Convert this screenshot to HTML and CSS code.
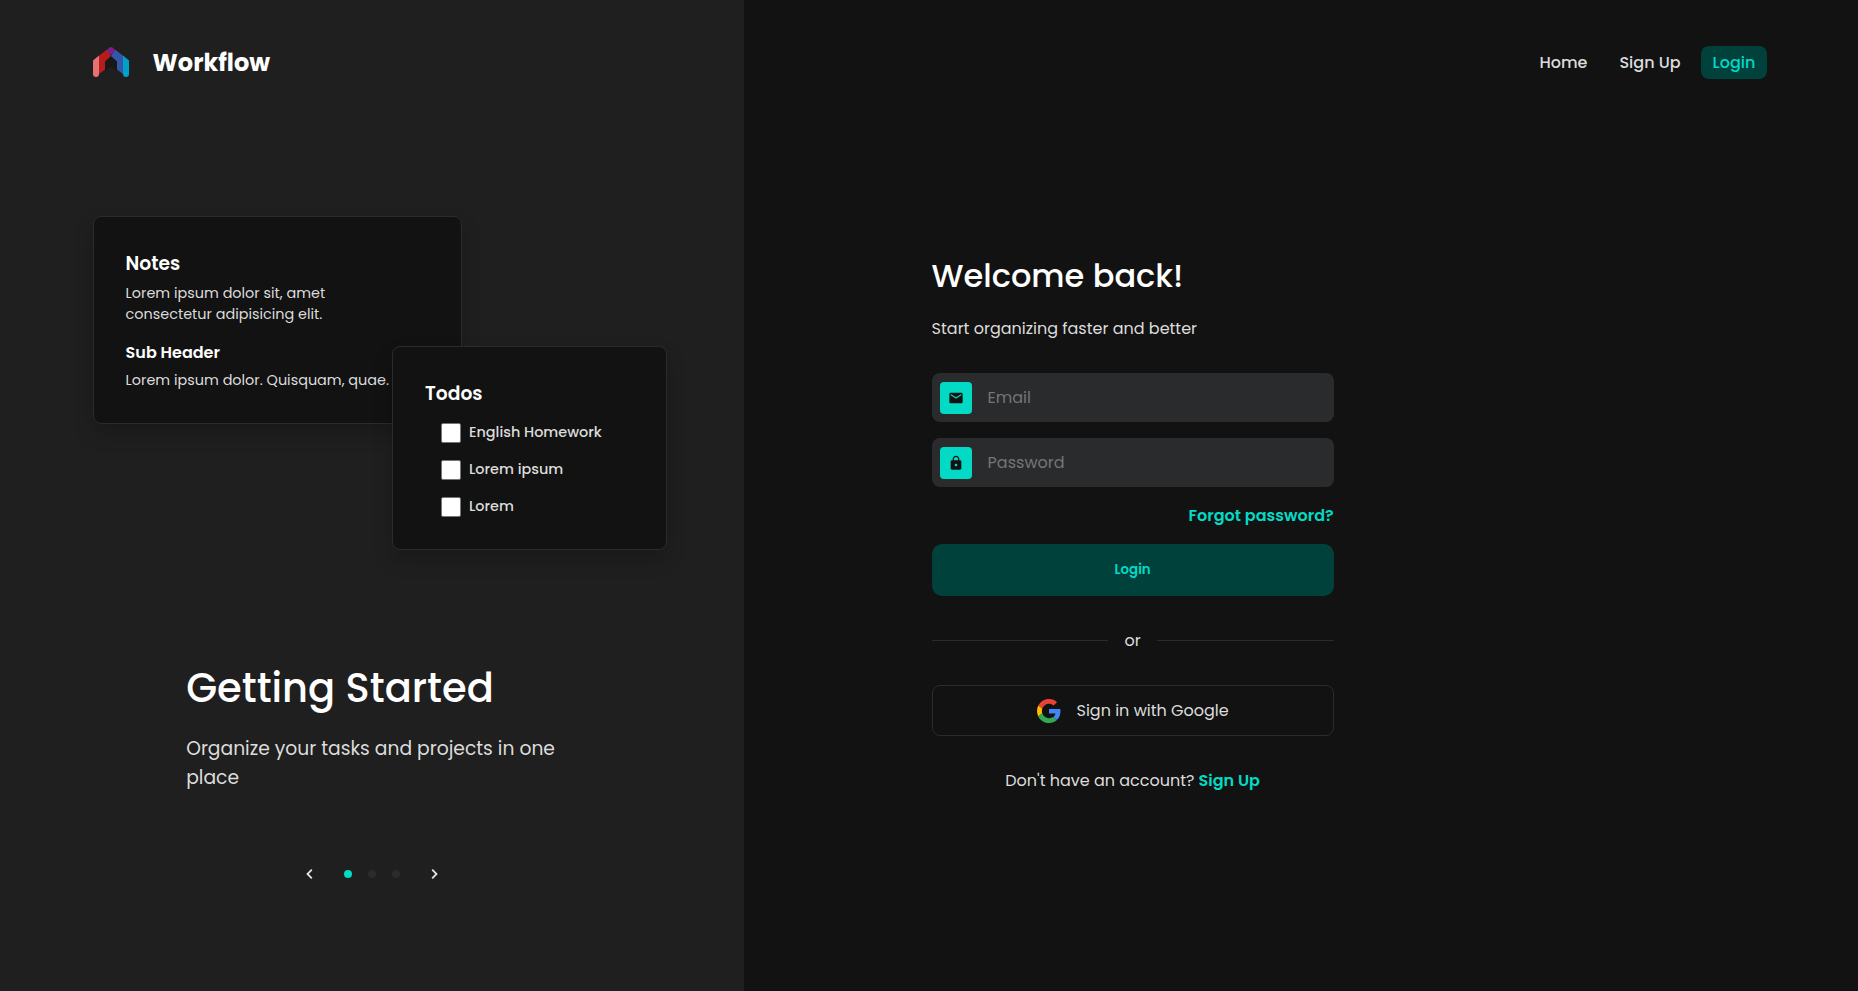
FILE: index.html
```html
<!DOCTYPE html>
<html lang="en">
<head>
<meta charset="utf-8">
<title>Workflow</title>
<link rel="stylesheet" href="styles.css">
</head>
<body>
<div class="page">
  <aside class="intro">
    <div class="brand">
      <svg class="logo" width="36" height="30" viewBox="0 0 36 30">
        <path fill="#171717" d="M12 15 18 9l6 6v9l-6-4-6 4z"/>
        <path fill="#e57373" d="M0 13.500 6 8.500V27a3 3 0 0 1-6 0z"/>
        <path fill="#b71c1c" d="M6 8.800 14 2.500 18 9 12 14.500V22.500L6 27z"/>
        <path fill="#00a0c8" d="M36 13.500 30 8.500V27a3 3 0 0 0 6 0z"/>
        <path fill="#3457a8" d="M30 8.800 22 2.500 18 9 24 14.500V22.500L30 27z"/>
        <path fill="#7b1f8e" d="M13.500 3.500 16.500.6a2.400 2.400 0 0 1 3 0L22.500 3.500 18 8z"/>
      </svg>
      <span class="brand-name">Workflow</span>
    </div>
    <div class="showcase">
      <section class="card notes">
        <h3 class="card-title">Notes</h3>
        <p class="card-text first">Lorem ipsum dolor sit, amet<br>consectetur adipisicing elit.</p>
        <h4 class="card-sub">Sub Header</h4>
        <p class="card-text">Lorem ipsum dolor. Quisquam, quae.</p>
      </section>
      <section class="card todos">
        <h3 class="card-title">Todos</h3>
        <ul class="todo-list">
          <li class="todo"><span class="box"></span><span>English Homework</span></li>
          <li class="todo"><span class="box"></span><span>Lorem ipsum</span></li>
          <li class="todo"><span class="box"></span><span>Lorem</span></li>
        </ul>
      </section>
    </div>
    <div class="pitch">
      <h1 class="pitch-title">Getting Started</h1>
      <p class="pitch-text">Organize your tasks and projects in one<br>place</p>
    </div>
    <div class="pager">
      <svg class="chev" width="16" height="16" viewBox="0 0 16 16"><path d="M10.800 3.700 6.500 8l4.300 4.300"/></svg>
      <div class="dots"><i class="dot on"></i><i class="dot"></i><i class="dot"></i></div>
      <svg class="chev" width="16" height="16" viewBox="0 0 16 16"><path d="M5.200 3.700 9.500 8l-4.300 4.300"/></svg>
    </div>
  </aside>
  <main class="main">
    <nav class="nav">
      <a class="nav-link n-home">Home</a>
      <a class="nav-link n-sign">Sign Up</a>
      <a class="nav-link nav-cta">Login</a>
    </nav>
    <div class="form">
      <h2 class="welcome">Welcome back!</h2>
      <p class="tagline">Start organizing faster and better</p>
      <div class="field">
        <span class="field-icon"><svg width="16" height="16" viewBox="0 0 24 24"><path d="M20 4H4c-1.100 0-1.990.9-1.990 2L2 18c0 1.100.9 2 2 2h16c1.100 0 2-.9 2-2V6c0-1.100-.9-2-2-2zm0 4-8 5-8-5V6l8 5 8-5v2z"/></svg></span>
        <span class="hint">Email</span>
      </div>
      <div class="field">
        <span class="field-icon"><svg width="16" height="16" viewBox="0 0 24 24"><path d="M18 8h-1V6c0-2.760-2.240-5-5-5S7 3.240 7 6v2H6c-1.100 0-2 .9-2 2v10c0 1.100.9 2 2 2h12c1.100 0 2-.9 2-2V10c0-1.100-.9-2-2-2zm-6 9c-1.100 0-2-.9-2-2s.9-2 2-2 2 .9 2 2-.9 2-2 2zm3.100-9H8.900V6c0-1.710 1.390-3.100 3.100-3.100 1.710 0 3.100 1.390 3.100 3.100v2z"/></svg></span>
        <span class="hint">Password</span>
      </div>
      <a class="forgot">Forgot password?</a>
      <div class="submit">Login</div>
      <div class="divider"><span class="rule"></span><span class="or">or</span><span class="rule"></span></div>
      <div class="google">
        <svg width="24" height="24" viewBox="0 0 48 48">
          <path fill="#ea4335" d="M24 9.500c3.540 0 6.710 1.220 9.210 3.600l6.850-6.850C35.900 2.380 30.470 0 24 0 14.620 0 6.510 5.380 2.560 13.220l7.980 6.190C12.430 13.720 17.740 9.500 24 9.500z"/>
          <path fill="#4285f4" d="M46.980 24.550c0-1.570-.15-3.090-.38-4.550H24v9.020h12.940c-.58 2.960-2.260 5.480-4.780 7.180l7.730 6c4.510-4.180 7.090-10.360 7.090-17.650z"/>
          <path fill="#fbbc05" d="M10.530 28.590c-.48-1.450-.76-2.990-.76-4.590s.27-3.140.76-4.590l-7.980-6.190C.92 16.460 0 20.120 0 24s.92 7.540 2.560 10.780l7.970-6.190z"/>
          <path fill="#34a853" d="M24 48c6.480 0 11.930-2.130 15.890-5.810l-7.730-6c-2.150 1.450-4.920 2.300-8.160 2.300-6.260 0-11.570-4.220-13.470-9.910l-7.980 6.190C6.510 42.620 14.620 48 24 48z"/>
        </svg>
        <span class="google-text">Sign in with Google</span>
      </div>
      <p class="signup"><span>Don't have an account?</span><a class="signup-link">Sign Up</a></p>
    </div>
  </main>
</div>
</body>
</html>
```
FILE: styles.css
```css
* { box-sizing: border-box; margin: 0; padding: 0; }
body { font-family: Poppins, Inter, sans-serif; font-size: 16px; line-height: 24px; color: #dcdcdc; background: #121212; white-space: nowrap; }
.page { display: flex; height: 991px; overflow: hidden; }
svg { display: block; flex: none; }

.intro { width: 743.600px; background: #1f1f1f; padding: 46px 77px 0 92.600px; flex: none; }
.brand { display: flex; align-items: center; gap: 24px; height: 32px; }
.brand-name { font-size: 24px; font-weight: 700; color: #fff; padding-top: 2px; }

.showcase { display: grid; grid-template-columns: 299.400px 70px 205px; grid-template-rows: 130px 78px 126px; margin-top: 138px; }
.card { background: #121212; border: 1px solid #2a2b2d; border-radius: 8px; padding: 33px 32px 31px; box-shadow: 0 10px 20px rgba(0, 0, 0, .19); }
.notes { grid-area: 1 / 1 / 3 / 3; }
.todos { grid-area: 2 / 2 / 4 / 4; width: 275px; }
.card-title { font-size: 18.720px; font-weight: 600; line-height: 28px; color: #fff; }
.card-text { font-size: 14.400px; line-height: 21px; }
.card-text.first { margin: 5px 0 16px; }
.card-sub { font-size: 16px; font-weight: 600; line-height: 24px; color: #fff; margin-bottom: 5px; }
.todo-list { list-style: none; padding: 15px 0 0 16px; display: grid; gap: 17px; }
.todo { display: flex; gap: 8px; height: 20px; line-height: 18px; font-size: 14.400px; font-weight: 500; }
.box { width: 20px; height: 20px; background: #fff; border: 1px solid #767676; border-radius: 2px; }

.pitch { margin: 108px 0 0 93.600px; }
.pitch-title { font-size: 40px; font-weight: 500; line-height: 60px; color: #fff; }
.pitch-text { font-size: 18.720px; line-height: 29px; margin-top: 16px; }
.pager { display: flex; align-items: center; margin: 74px 0 0 208.400px; gap: 27px; }
.chev { fill: none; stroke: #e4e4e4; stroke-width: 1.800; }
.dots { display: flex; gap: 16px; }
.dot { width: 8px; height: 8px; border-radius: 50%; background: #2a2b2d; }
.dot.on { background: #03dac5; }

.main { flex: 1; padding: 46px 91px 0 188px; }
.nav { display: flex; justify-content: flex-end; height: 33px; align-items: center; font-weight: 500; }
.n-home { margin-right: 32px; }
.n-sign { margin-right: 20.400px; }
.nav-cta { width: 66px; height: 33px; line-height: 33px; text-align: center; background: #00413b; color: #03dac5; border-radius: 8px; }

.form { width: 402px; margin-top: 173px; }
.welcome { font-size: 32px; font-weight: 500; line-height: 48px; color: #fff; }
.tagline { margin: 17px 0 32px; }
.field { display: flex; align-items: center; gap: 16px; height: 49px; padding: 0 8px; margin-bottom: 16px; border-radius: 8px; background: #2a2b2d; }
.field-icon { width: 32px; height: 32px; display: grid; place-items: center; background: #03dac5; fill: #121212; border-radius: 4px; }
.hint { color: #757575; }
.forgot { display: block; margin-top: 17px; text-align: right; font-weight: 600; color: #03dac5; }
.submit { margin-top: 16px; height: 52px; line-height: 51px; border-radius: 10px; background: #00413b; color: #03dac5; text-align: center; font-size: 13.333px; font-weight: 600; }
.divider { display: flex; align-items: center; gap: 16px; margin: 32px 0; height: 25px; }
.rule { flex: 1; height: 1px; background: #2a2b2d; }
.google { display: flex; align-items: center; justify-content: center; gap: 16px; height: 51px; border: 1px solid #2a2b2d; border-radius: 8px; }
.signup { display: flex; justify-content: center; gap: 4px; margin-top: 33px; }
.signup-link { font-weight: 600; color: #03dac5; }
```
